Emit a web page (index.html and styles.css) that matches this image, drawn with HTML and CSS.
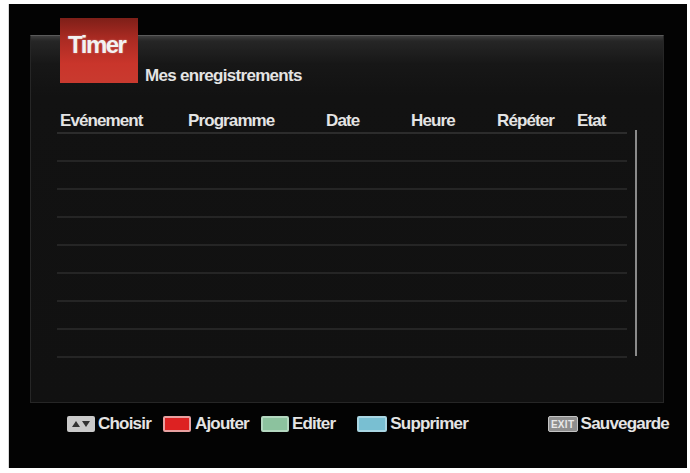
FILE: index.html
```html
<!DOCTYPE html>
<html lang="fr">
<head>
<meta charset="utf-8">
<title>Timer</title>
<link rel="stylesheet" href="styles.css">
</head>
<body>
<div class="frame">
  <div class="panel">
    <div class="title-row">
      <div class="title-box">Timer</div>
      <div class="subtitle">Mes enregistrements</div>
    </div>
    <div class="table-area">
      <div class="table">
        <div class="row head">
          <span>Evénement</span><span>Programme</span><span>Date</span><span>Heure</span><span>Répéter</span><span>Etat</span>
        </div>
        <div class="row"></div>
        <div class="row"></div>
        <div class="row"></div>
        <div class="row"></div>
        <div class="row"></div>
        <div class="row"></div>
        <div class="row"></div>
        <div class="row"></div>
      </div>
      <div class="scrollbar"></div>
    </div>
  </div>
  <div class="footer">
    <div class="key">
      <span class="icon arrows">
        <svg width="20" height="10" viewBox="0 0 20 10"><polygon points="1,8 5,2 9,8" fill="#333"/><polygon points="11,2 19,2 15,8" fill="#333"/></svg>
      </span>
      <span class="label">Choisir</span>
    </div>
    <div class="key">
      <span class="icon red"></span>
      <span class="label">Ajouter</span>
    </div>
    <div class="key key-wide">
      <span class="icon green"></span>
      <span class="label">Editer</span>
    </div>
    <div class="key">
      <span class="icon blue"></span>
      <span class="label">Supprimer</span>
    </div>
    <div class="key exit-key">
      <span class="icon exit">EXIT</span>
      <span class="label">Sauvegarde</span>
    </div>
  </div>
</div>
</body>
</html>
```
FILE: styles.css
```css
* { box-sizing: border-box; }
html, body { margin: 0; padding: 0; background: #fff; }
body {
  font-family: "Liberation Sans", Arial, sans-serif;
  font-weight: bold;
  color: #e4e4e4;
}
.frame {
  margin: 4px 0 0 8px;
  width: 679px;
  height: 464px;
  background: #030303;
  border-left: 1px solid #d8d8d8;
  padding-top: 31px;
  display: flex;
  flex-direction: column;
}
.panel {
  margin-left: 21px;
  width: 634px;
  height: 368px;
  border: 1px solid #262626;
  border-top-color: #5a5a5a;
  background: linear-gradient(#3e3e3e 0, #262626 5px, #171717 28px, #121212 60px, #111 100%);
  padding-left: 29px;
}
.title-row {
  display: flex;
  align-items: flex-end;
  margin-top: -18px;
  height: 65px;
}
.title-box {
  width: 78px;
  height: 65px;
  background: linear-gradient(#7e1f18 0, #a82a22 30%, #c9352b 70%, #c93a2f 100%);
  color: #f2f2f2;
  font-size: 24px;
  line-height: 24px;
  letter-spacing: -1.5px;
  padding: 15px 0 0 8px;
  text-shadow: 0 0 2px rgba(255,255,255,0.4);
}
.subtitle {
  font-size: 17px;
  line-height: 17px;
  margin: 0 0 -1px 7px;
  letter-spacing: -0.7px;
}
.table-area {
  display: flex;
  margin-top: 25px;
  margin-left: -3px;
}
.table {
  width: 570px;
}
.row {
  display: grid;
  grid-template-columns: 128px 138px 85px 86px 80px 1fr;
  height: 28px;
  border-bottom: 2px solid #252525;
  padding-left: 3px;
}
.row.head {
  height: 26px;
  line-height: 26px;
  font-size: 17px;
  border-bottom-color: #2c2c2c;
  letter-spacing: -0.9px;
}
.scrollbar {
  width: 2px;
  height: 226px;
  margin-top: 22px;
  margin-left: 8px;
  background: #8a8a8a;
}
.footer {
  display: flex;
  align-items: center;
  margin-top: 11px;
  padding-left: 58px;
  padding-right: 18px;
  height: 20px;
}
.key {
  display: flex;
  align-items: center;
  margin-right: 12px;
}
.key-wide { margin-right: 22px; }
.icon {
  width: 28px;
  height: 16px;
  border-radius: 2px;
  margin-right: 3px;
  display: flex;
  align-items: center;
  justify-content: center;
}
.arrows { background: #cacaca; }
.red { background: #dd2222; border: 2px solid #e8a0a0; margin-right: 4px; }
.green { background: #8cc29e; border: 2px solid #b4d8c0; }
.blue { background: #79bfd2; border: 2px solid #a9d6e3; width: 30px; }
.exit {
  width: 30px;
  background: #8e8e8e;
  border: 1px solid #c4c4c4;
  color: #e8e8e8;
  font-size: 10px;
  letter-spacing: 0.3px;
}
.label {
  font-size: 17px;
  line-height: 20px;
  letter-spacing: -0.8px;
}
.exit-key { margin-left: auto; margin-right: 0; }
```
